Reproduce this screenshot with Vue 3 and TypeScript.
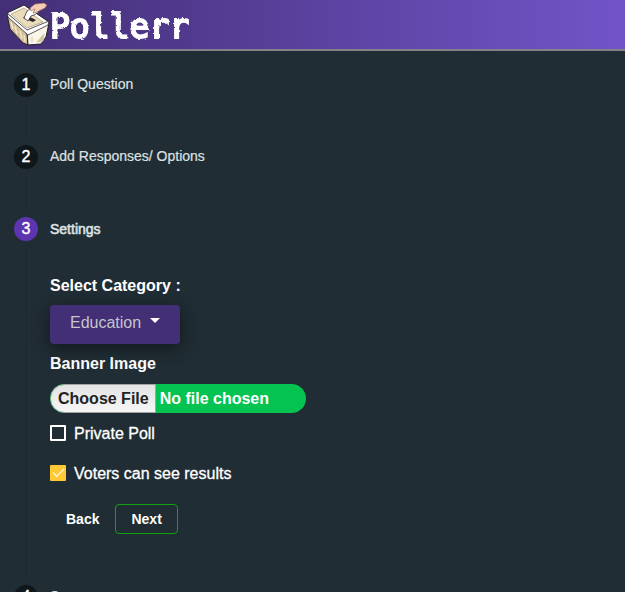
<script setup lang="ts">
import { ref } from 'vue'

const category = ref('Education')
const privatePoll = ref(false)
const showResults = ref(true)
const activeStep = ref(3)
</script>

<template>
  <div class="page">
    <header class="topbar">
      <a class="brand" href="#">
        <svg class="ballot" viewBox="0 0 43 42" aria-hidden="true">
          <defs>
            <filter id="chalk">
              <feTurbulence type="fractalNoise" baseFrequency="0.35" numOctaves="2" seed="4" result="grain" />
              <feDisplacementMap in="SourceGraphic" in2="grain" scale="3" />
            </filter>
          </defs>
          <path d="M0 10 20 28 21 41 16 39 3 25Z" fill="#d3c09b" stroke="#22202a" stroke-width="1" />
          <path d="M20 28 42 19 39 33 34 40 21 41Z" fill="#fbf6ea" stroke="#22202a" stroke-width="1" />
          <path d="M0 9 17 1 42 18 20 28Z" fill="#fffdf6" stroke="#22202a" stroke-width="1" />
          <path d="M4 10 17 4 36 18 20 24Z" fill="#eadbb9" stroke="#92856d" stroke-width=".6" />
          <path d="M0 9 20 26 42 17 41 21 21 31 1 13Z" fill="#fff" stroke="#302a2b" stroke-width=".8" />
          <path d="M4 18 6 25M8 22 10 30M13 27 15 35M17 31 18 38" stroke="#f4e8ca" stroke-width="1.4" />
          <path d="M25 33v5M30 38 37 30 36 37Z" fill="#d5c4a2" stroke="#d5c4a2" />
          <path d="m16 14 10 4 3-2-10-5Z" fill="#2c2729" />
          <path d="m17 14 3-7 6-4 6 5-5 3-3 1-3 5Z" fill="#fff" stroke="#37313a" stroke-width=".8" />
          <path d="M23 4 28 0 37-1 40 1 38 4 30 8 26 9 28 5 24 7Z" fill="#f5cbb3" stroke="#8a5b50" stroke-width=".6" />
        </svg>
        <span class="wordmark">Pollerr</span>
      </a>
    </header>

    <main class="stepper">
      <section class="step">
        <div class="step-head"><span class="badge">1</span><span class="step-label">Poll Question</span></div>
        <div class="connector"></div>
      </section>
      <section class="step">
        <div class="step-head"><span class="badge">2</span><span class="step-label">Add Responses/ Options</span></div>
        <div class="connector"></div>
      </section>
      <section class="step">
        <div class="step-head">
          <span class="badge active">3</span><span class="step-label current">Settings</span>
        </div>
        <form class="content" @submit.prevent="activeStep++">
          <label class="field-label" for="category">Select Category :</label>
          <div class="select-wrap">
            <select id="category" v-model="category">
              <option>Education</option>
            </select>
            <svg class="caret" viewBox="0 0 10 5" aria-hidden="true"><path d="M0 0h10L5 5Z" fill="#fff" /></svg>
          </div>
          <label class="field-label banner-label" for="banner">Banner Image</label>
          <input id="banner" class="file" type="file" accept="image/*" />
          <label class="check"><input v-model="privatePoll" type="checkbox" /><span>Private Poll</span></label>
          <label class="check"><input v-model="showResults" type="checkbox" /><span>Voters can see results</span></label>
          <div class="actions">
            <button class="btn" type="button" @click="activeStep--">Back</button>
            <button class="btn next" type="submit">Next</button>
          </div>
        </form>
        <div class="connector"></div>
      </section>
      <section class="step">
        <div class="step-head"><span class="badge">4</span><span class="step-label">Summary</span></div>
      </section>
    </main>
  </div>
</template>

<style>
body {
  margin: 0;
  background: #202d34;
}
</style>

<style scoped>
.page {
  height: 100vh;
  overflow: hidden;
  background: #202d34;
  color: #fff;
  font-family: "Liberation Sans", Arial, sans-serif;
  font-size: 16px;
}
.topbar {
  box-sizing: border-box;
  height: 51px;
  padding: 0 7px;
  border-bottom: 2px solid #85808a;
  background: linear-gradient(90deg, #432f75, #7254c8);
}
.brand {
  display: flex;
  align-items: center;
  height: 49px;
  color: #fff;
  text-decoration: none;
}
.ballot {
  width: 43px;
  height: 42px;
  overflow: visible;
}
.wordmark {
  padding-top: 4px;
  font-family: "DejaVu Sans Mono", monospace;
  font-size: 33px;
  line-height: 44px;
  -webkit-text-stroke: 2px #fff;
  filter: url(#chalk);
}
.stepper {
  padding: 14px;
}
.step-head {
  display: flex;
  align-items: center;
  gap: 12px;
  height: 40px;
}
.badge {
  width: 24px;
  border-radius: 50%;
  background: #0f171a;
  font-size: 16px;
  line-height: 24px;
  text-align: center;
  -webkit-text-stroke: 0.4px #fff;
}
.badge.active {
  background: #5e35b1;
}
.step-label {
  padding-bottom: 2px;
  color: #dee0e1;
  font-size: 14px;
  line-height: 20px;
  -webkit-text-stroke: 0.2px #dee0e1;
}
.step-label.current {
  padding-bottom: 0;
  -webkit-text-stroke: 0.6px #dee0e1;
}
.connector {
  height: 32px;
  margin-left: 12px;
  border-left: 1px solid #1c282e;
}
.content {
  display: flex;
  flex-direction: column;
  align-items: flex-start;
  box-sizing: border-box;
  margin-left: 12px;
  padding: 25px 0 11px 23px;
  border-left: 1px solid #1c282e;
}
.field-label {
  font-weight: 700;
  line-height: 24px;
}
.banner-label {
  margin-top: 8px;
}
.select-wrap {
  position: relative;
  margin-top: 7px;
}
select {
  display: block;
  width: 130px;
  height: 39px;
  padding: 0 20px 4px;
  appearance: none;
  border: 0;
  border-radius: 4px;
  background: #432f75;
  box-shadow: 0 4px 16px #10181d;
  color: #c6c4cc;
  font: inherit;
}
.caret {
  position: absolute;
  top: 13px;
  right: 20px;
  width: 10px;
  height: 5px;
  pointer-events: none;
}
.file {
  width: 256px;
  height: 29px;
  margin-top: 8px;
  border-radius: 15px;
  background: #04c351;
  color: #fff;
  font: 700 16px/29px "Liberation Sans", Arial, sans-serif;
}
.file::file-selector-button {
  box-sizing: border-box;
  height: 29px;
  margin: 0 4px 0 0;
  padding: 0 6px 0 7px;
  border: 1px solid #a2a5a4;
  border-radius: 15px 0 0 15px;
  background: linear-gradient(#e3e3e3, #f6f6f6);
  color: #222;
  font: inherit;
  line-height: 27px;
}
.check {
  display: flex;
  align-items: center;
  gap: 8px;
  height: 40px;
}
.check span {
  padding-top: 2px;
  -webkit-text-stroke: 0.3px #fff;
}
.check input {
  display: grid;
  place-items: center;
  box-sizing: border-box;
  width: 16px;
  height: 16px;
  margin: 0;
  appearance: none;
  border: 2px solid #fff;
  border-radius: 1px;
}
.check input:checked {
  border-color: #ffca33;
  background: #ffca33;
}
.check input:checked::after {
  width: 10px;
  height: 5px;
  margin-bottom: 4px;
  border: solid #fff;
  border-width: 0 0 1px 1px;
  content: "";
  transform: rotate(-45deg);
}
.actions {
  display: flex;
  margin-top: 11px;
}
.btn {
  box-sizing: border-box;
  height: 30px;
  padding: 0 15px;
  border: 1px solid transparent;
  border-radius: 4px;
  background: transparent;
  color: #fff;
  font: 700 14px/20px "Liberation Sans", Arial, sans-serif;
}
.next {
  border-color: #13a10e;
}
</style>
